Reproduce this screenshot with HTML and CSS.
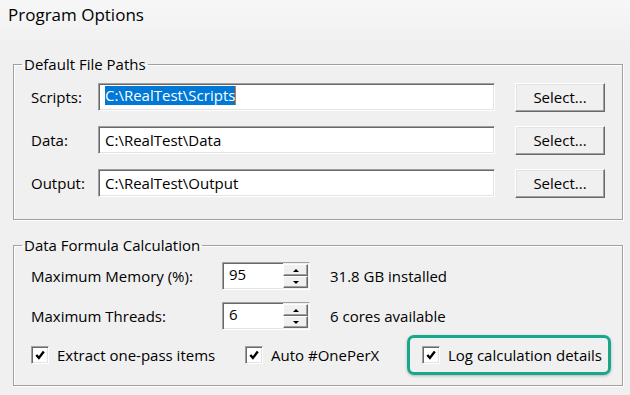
FILE: index.html
```html
<!DOCTYPE html>
<html lang="en">
<head>
<meta charset="utf-8">
<title>Program Options</title>
<link rel="stylesheet" href="styles.css">
</head>
<body>
<div class="dialog">
  <div class="title">Program Options</div>

  <fieldset class="group paths">
    <legend>Default File Paths</legend>
    <div class="rows path-rows">
      <div class="path-row">
        <span class="label path-label">Scripts:</span>
        <div class="edit"><span class="sel">C:\RealTest\Scripts</span><span class="caret"></span></div>
        <button class="btn" type="button">Select...</button>
      </div>
      <div class="path-row">
        <span class="label path-label">Data:</span>
        <div class="edit">C:\RealTest\Data</div>
        <button class="btn" type="button">Select...</button>
      </div>
      <div class="path-row">
        <span class="label path-label">Output:</span>
        <div class="edit">C:\RealTest\Output</div>
        <button class="btn" type="button">Select...</button>
      </div>
    </div>
  </fieldset>

  <fieldset class="group calc">
    <legend>Data Formula Calculation</legend>
    <div class="rows calc-rows">
      <div class="spin-row">
        <span class="label spin-label">Maximum Memory (%):</span>
        <div class="spin">
          <span class="spin-value">95</span>
          <span class="spin-btns"><span class="spin-btn up"></span><span class="spin-btn down"></span></span>
        </div>
        <span class="note">31.8 GB installed</span>
      </div>
      <div class="spin-row">
        <span class="label spin-label">Maximum Threads:</span>
        <div class="spin">
          <span class="spin-value">6</span>
          <span class="spin-btns"><span class="spin-btn up"></span><span class="spin-btn down"></span></span>
        </div>
        <span class="note">6 cores available</span>
      </div>
      <div class="checks">
        <label class="check">
          <span class="box"><svg width="10" height="10" viewBox="0 0 10 10"><path d="M1.3 5 L3.9 7.9 L8.8 1.6" fill="none" stroke="#000" stroke-width="2.4"/></svg></span>
          <span>Extract one-pass items</span>
        </label>
        <label class="check">
          <span class="box"><svg width="10" height="10" viewBox="0 0 10 10"><path d="M1.3 5 L3.9 7.9 L8.8 1.6" fill="none" stroke="#000" stroke-width="2.4"/></svg></span>
          <span>Auto #OnePerX</span>
        </label>
        <div class="highlight">
          <label class="check">
            <span class="box"><svg width="10" height="10" viewBox="0 0 10 10"><path d="M1.3 5 L3.9 7.9 L8.8 1.6" fill="none" stroke="#000" stroke-width="2.4"/></svg></span>
            <span>Log calculation details</span>
          </label>
        </div>
      </div>
    </div>
  </fieldset>
</div>
</body>
</html>
```

FILE: styles.css
```css
html, body {
  margin: 0;
  padding: 0;
}

body {
  width: 630px;
  height: 395px;
  overflow: hidden;
  background: linear-gradient(#f7f7f7 0, #f0f0f0 46px, #f0f0f0 100%);
  font-family: "Open Sans", "Noto Sans", sans-serif;
  font-size: 15px;
  color: #000;
}

.dialog {
  display: flex;
  flex-direction: column;
}

.title {
  padding: 5px 8px 0;
  font-size: 17px;
  line-height: 20px;
  height: 20px;
}

.group {
  box-sizing: border-box;
  width: 610px;
  margin: 0 0 0 13px;
  padding: 0;
  border: 1px solid #a0a0a0;
  box-shadow: 1px 1px 0 #fff, inset 1px 1px 0 #fff;
  min-width: 0;
}

.paths {
  margin-top: 29px;
}

.calc {
  margin-top: 15px;
}

.group legend {
  margin-left: 8px;
  padding: 1px 2px 0;
  line-height: 19px;
  height: 19px;
}

.rows {
  display: flex;
  flex-direction: column;
  padding-left: 17px;
}

.path-rows {
  padding-top: 9px;
  padding-bottom: 22px;
  gap: 15px;
}

.calc-rows {
  padding-top: 7px;
  padding-bottom: 16px;
  gap: 12px;
}

.path-row,
.spin-row {
  display: flex;
  align-items: center;
  height: 28px;
}

.label {
  line-height: 20px;
}

.path-label {
  width: 67px;
  flex: none;
}

.edit {
  box-sizing: border-box;
  width: 397px;
  height: 28px;
  flex: none;
  display: flex;
  align-items: center;
  padding-left: 6px;
  background: #fff;
  border: 1px solid;
  border-color: #a0a0a0 #fff #fff #a0a0a0;
  box-shadow: inset 1px 1px 0 #696969, inset -1px -1px 0 #e3e3e3;
  line-height: 19px;
  white-space: nowrap;
}

.sel {
  background: #0078d7;
  color: #fff;
  height: 19px;
  line-height: 19px;
  margin-top: -3px;
}

.caret {
  width: 1px;
  height: 19px;
  margin-top: -3px;
  background: #e0761a;
}

.btn {
  box-sizing: border-box;
  width: 90px;
  height: 29px;
  margin-left: 20px;
  flex: none;
  padding: 0;
  font: inherit;
  line-height: 20px;
  color: #000;
  background: #f0f0f0;
  border: 1px solid;
  border-color: #fff #696969 #696969 #fff;
  box-shadow: inset -1px -1px 0 #a0a0a0, inset 1px 1px 0 #e3e3e3;
  border-radius: 0;
}

.spin-label {
  width: 191px;
  flex: none;
}

.spin {
  box-sizing: border-box;
  width: 88px;
  height: 28px;
  flex: none;
  display: flex;
  background: #fff;
  border: 1px solid;
  border-color: #a0a0a0 #fff #fff #a0a0a0;
  box-shadow: inset 1px 1px 0 #696969, inset -1px -1px 0 #e3e3e3;
}

.spin-value {
  flex: 1;
  padding-left: 6px;
  line-height: 22px;
}

.spin-btns {
  display: flex;
  flex-direction: column;
  width: 25px;
  padding: 1px 1px 1px 0;
  background: #f0f0f0;
}

.spin-btn {
  flex: 1;
  display: flex;
  align-items: center;
  justify-content: center;
  box-sizing: border-box;
  background: #f0f0f0;
  border: 1px solid;
  border-color: #fff #696969 #696969 #fff;
  box-shadow: inset -1px -1px 0 #a0a0a0;
}

.spin-btn::before {
  content: "";
  width: 0;
  height: 0;
  border-left: 3px solid transparent;
  border-right: 3px solid transparent;
}

.spin-btn.up::before {
  border-bottom: 3px solid #000;
}

.spin-btn.down::before {
  border-top: 3px solid #000;
}

.note {
  margin-left: 20px;
  line-height: 20px;
}

.checks {
  display: grid;
  grid-template-columns: 214px 177px auto;
  align-items: center;
  height: 28px;
  margin-top: -1px;
}

.check {
  display: flex;
  align-items: center;
  gap: 8px;
  height: 28px;
  line-height: 20px;
  white-space: nowrap;
}

.box {
  box-sizing: border-box;
  width: 18px;
  height: 18px;
  flex: none;
  display: flex;
  align-items: center;
  justify-content: center;
  background: #fff;
  border: 1px solid;
  border-color: #a0a0a0 #fff #fff #a0a0a0;
  box-shadow: inset 1px 1px 0 #696969, inset -1px -1px 0 #e3e3e3;
}

.highlight {
  justify-self: start;
  margin: -6px 0 -6px -15px;
  padding: 3px 6px 3px 12px;
  border: 3px solid #17a88b;
  border-radius: 7px;
  box-shadow: 0 1px 3px rgba(0, 0, 0, 0.25);
}
```
